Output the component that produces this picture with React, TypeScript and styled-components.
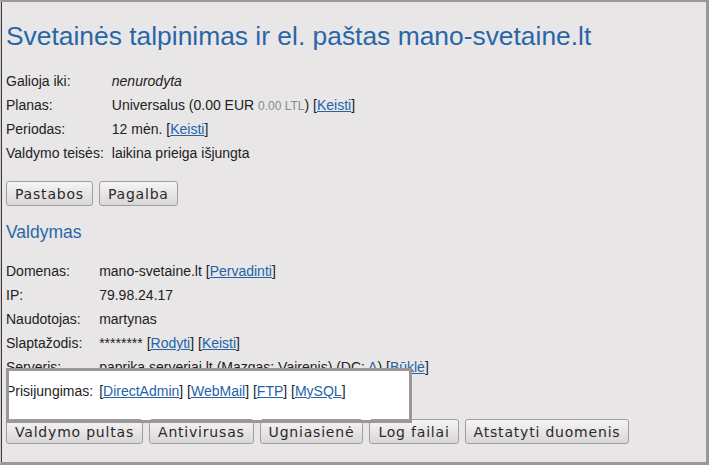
import React from 'react';
import styled, { createGlobalStyle } from 'styled-components';

const GlobalStyle = createGlobalStyle`
    html, body {
        margin: 0;
        padding: 0;
        background: #e8e6e7;
    }
    body {
        font-family: "Liberation Sans", Arial, sans-serif;
        font-size: 14px;
        color: #222;
    }
`;

const Frame = styled.div`
    width: 709px;
    height: 465px;
    box-sizing: border-box;
    overflow: hidden;
    border-top: 2px solid #9e9598;
    border-right: 3px solid #9e9598;
    border-bottom: 3px solid #9e9598;
    border-left: 1px solid #cfcacc;
    box-shadow: inset 1px 0 0 #3a3a3a;
    padding: 0 4px 0 5px;
    background: #e8e6e7;
`;

const Title = styled.h1`
    margin: 18px 0 0 0;
    font-size: 26.4px;
    line-height: 32px;
    font-weight: normal;
    color: #2866a8;
`;

const SubTitle = styled.h2<{ $top: number }>`
    margin: ${p => p.$top}px 0 0 0;
    font-size: 17.5px;
    line-height: 22px;
    font-weight: normal;
    color: #2866a8;
`;

const InfoGrid = styled.div<{ $top: number; $gap: number }>`
    margin-top: ${p => p.$top}px;
    display: grid;
    grid-template-columns: max-content 1fr;
    column-gap: ${p => p.$gap}px;
    grid-auto-rows: 24px;
    align-items: center;
    white-space: nowrap;
`;

const Cell = styled.div`
    line-height: 24px;
`;

const Highlighted = styled.div`
    grid-column: 1 / -1;
    display: grid;
    grid-template-columns: subgrid;
    position: relative;
    line-height: 24px;
`;

// white fill sits under the buttons, the outline above them
const HighlightFill = styled.div`
    position: absolute;
    left: 0;
    top: -11px;
    width: 406px;
    height: 55px;
    background: #ffffff;
    z-index: 0;
`;

const HighlightFrame = styled.div`
    position: absolute;
    left: 0;
    top: -11px;
    width: 406px;
    height: 55px;
    box-sizing: border-box;
    border: 3px solid #9e9598;
    z-index: 2;
    pointer-events: none;
`;

const Raised = styled.div`
    position: relative;
    z-index: 1;
`;

const Em = styled.span`
    font-style: italic;
`;

const Muted = styled.span`
    font-size: 12px;
    color: #8a8a8a;
`;

const Link = styled.a`
    color: #2563a8;
    text-decoration: underline;
`;

const ButtonRow = styled.div<{ $top: number }>`
    margin-top: ${p => p.$top}px;
    display: flex;
    gap: 6px;
    position: relative;
    z-index: 1;
`;

const Button = styled.button`
    height: 25px;
    box-sizing: border-box;
    padding: 0 8px;
    font-family: "DejaVu Sans", sans-serif;
    font-size: 14px;
    letter-spacing: 0.8px;
    color: #2a2a2a;
    background: linear-gradient(180deg, #f6f5f5 0%, #e4e2e2 60%, #d9d6d7 100%);
    border: 1px solid #a39c9f;
    border-radius: 3px;
    cursor: pointer;
`;

const Bracketed = ({ children }: { children: string }) => (
    <>[<Link href="#">{children}</Link>]</>
);

export default function App() {
    return (
        <>
            <GlobalStyle />
            <Frame>
                <Title>Svetainės talpinimas ir el. paštas mano-svetaine.lt</Title>

                <InfoGrid $top={17} $gap={8}>
                    <Cell>Galioja iki:</Cell>
                    <Cell><Em>nenurodyta</Em></Cell>
                    <Cell>Planas:</Cell>
                    <Cell>Universalus (0.00 EUR <Muted>0.00 LTL</Muted>) <Bracketed>Keisti</Bracketed></Cell>
                    <Cell>Periodas:</Cell>
                    <Cell>12 mėn. <Bracketed>Keisti</Bracketed></Cell>
                    <Cell>Valdymo teisės:</Cell>
                    <Cell>laikina prieiga išjungta</Cell>
                </InfoGrid>

                <ButtonRow $top={16}>
                    <Button>Pastabos</Button>
                    <Button>Pagalba</Button>
                </ButtonRow>

                <SubTitle $top={15}>Valdymas</SubTitle>

                <InfoGrid $top={16} $gap={6}>
                    <Cell>Domenas:</Cell>
                    <Cell>mano-svetaine.lt <Bracketed>Pervadinti</Bracketed></Cell>
                    <Cell>IP:</Cell>
                    <Cell>79.98.24.17</Cell>
                    <Cell>Naudotojas:</Cell>
                    <Cell>martynas</Cell>
                    <Cell>Slaptažodis:</Cell>
                    <Cell>******** <Bracketed>Rodyti</Bracketed> <Bracketed>Keisti</Bracketed></Cell>
                    <Cell>Serveris:</Cell>
                    <Cell>paprika.serveriai.lt (Mazgas: Vairenis) (DC: <Link href="#">A</Link>) <Bracketed>Būklė</Bracketed></Cell>
                    <Highlighted>
                        <HighlightFill />
                        <HighlightFrame />
                        <Raised>Prisijungimas:</Raised>
                        <Raised>
                            <Bracketed>DirectAdmin</Bracketed> <Bracketed>WebMail</Bracketed>{' '}
                            <Bracketed>FTP</Bracketed> <Bracketed>MySQL</Bracketed>
                        </Raised>
                    </Highlighted>
                </InfoGrid>

                <ButtonRow $top={16}>
                    <Button>Valdymo pultas</Button>
                    <Button>Antivirusas</Button>
                    <Button>Ugniasienė</Button>
                    <Button>Log failai</Button>
                    <Button>Atstatyti duomenis</Button>
                </ButtonRow>

                <SubTitle $top={14}>Talpinimo statistika</SubTitle>
            </Frame>
        </>
    );
}
